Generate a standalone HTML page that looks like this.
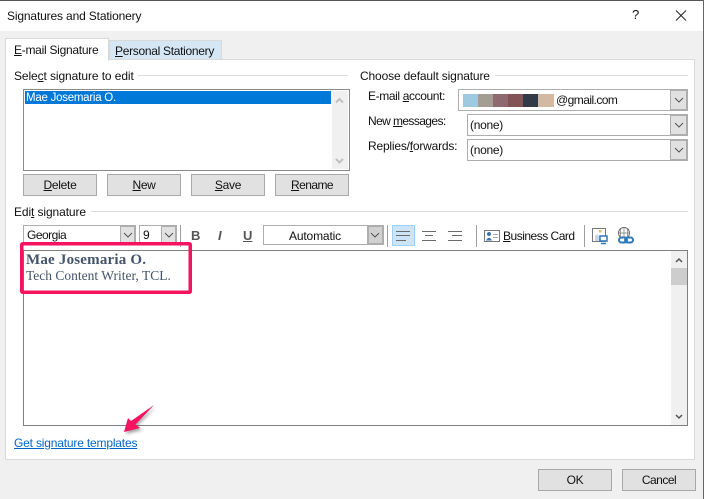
<!DOCTYPE html>
<html><head><meta charset="utf-8">
<style>
html,body{margin:0;padding:0;width:706px;height:499px;overflow:hidden;background:#f0f0f0}
.b{position:absolute;box-sizing:border-box}
.t{position:absolute;white-space:nowrap;font:12px/16px "Liberation Sans",sans-serif;color:#111}
.btn{position:absolute;box-sizing:border-box;height:22px;width:74px;background:#e1e1e1;border:1px solid #a8a8a8;font:12px/20px "Liberation Sans",sans-serif;color:#111;text-align:center;letter-spacing:-.3px}
.cb{position:absolute;box-sizing:border-box;background:#fff;border:1px solid #adadad}
.ar{position:absolute;box-sizing:border-box;background:#e1e1e1;border:2px solid #adadad;border-left-width:1px}
svg{position:absolute;overflow:visible}
</style></head><body>
<div class="b" style="left:0;top:0;width:703px;height:31px;background:#fff"></div>
<div class="b" style="left:0;top:0;width:704px;height:1px;background:#555"></div>
<div class="b" style="left:703px;top:0;width:1px;height:499px;background:#666"></div>
<div class="b" style="left:704px;top:0;width:2px;height:499px;background:#fff"></div>
<div class="t" style="left:7px;top:8px;letter-spacing:-.15px">Signatures and Stationery</div>
<div class="t" style="left:632px;top:7px;font-size:13px">?</div>
<svg style="left:0;top:0" width="706" height="40"><path d="M676 10.500L686 20.500M686 10.500L676 20.500" stroke="#222" stroke-width="1" fill="none"/></svg>

<div class="b" style="left:5px;top:59px;width:690px;height:401px;background:#fff;border:1px solid #d9d9d9"></div>
<div class="b" style="left:109px;top:40px;width:113px;height:20px;background:#d5e6f5;border:1px solid #d9d9d9"></div>
<div class="b" style="left:5px;top:38px;width:104px;height:23px;background:#fff;border:1px solid #d9d9d9;border-bottom:0"></div>
<div class="t" style="left:14px;top:42px;letter-spacing:-.27px"><u>E</u>-mail Signature</div>
<div class="t" style="left:115px;top:43px;letter-spacing:-.3px"><u>P</u>ersonal Stationery</div>

<div class="t" style="left:14px;top:68px;letter-spacing:-.1px">Sele<u>c</u>t signature to edit</div>
<div class="b" style="left:138px;top:75px;width:210px;height:1px;background:#dcdcdc"></div>
<div class="b" style="left:23px;top:89px;width:327px;height:82px;background:#fff;border:1px solid #8a8a8a"></div>
<div class="b" style="left:25px;top:91px;width:306px;height:13px;background:#0078d7"></div>
<div class="t" style="left:26px;top:90px;color:#fff;font-size:11.500px;letter-spacing:-.25px">Mae Josemaria O.</div>
<div class="b" style="left:332px;top:91px;width:16px;height:78px;background:#f0f0f0"></div>
<svg style="left:0;top:0" width="400" height="180"><path d="M336 102.500L339.500 99L343 102.500M336 159L339.500 162.500L343 159" stroke="#c0c0c0" stroke-width="2" fill="none"/></svg>

<div class="btn" style="left:23px;top:174px"><u>D</u>elete</div>
<div class="btn" style="left:107px;top:174px"><u>N</u>ew</div>
<div class="btn" style="left:191px;top:174px"><u>S</u>ave</div>
<div class="btn" style="left:275px;top:174px;letter-spacing:-.55px"><u>R</u>ename</div>

<div class="t" style="left:360px;top:68px;letter-spacing:-.15px">Choose default signature</div>
<div class="b" style="left:495px;top:75px;width:193px;height:1px;background:#dcdcdc"></div>
<div class="t" style="left:368px;top:88px;letter-spacing:-.38px">E-mail <u>a</u>ccount:</div>
<div class="t" style="left:368px;top:113px;letter-spacing:-.6px">New <u>m</u>essages:</div>
<div class="t" style="left:368px;top:138px;letter-spacing:-.2px">Replies/<u>f</u>orwards:</div>

<div class="cb" style="left:458px;top:89px;width:230px;height:22px"></div>
<div class="b" style="left:463px;top:94px;width:15px;height:13px;background:#9ecae1"></div>
<div class="b" style="left:478px;top:94px;width:15px;height:13px;background:#a39e91"></div>
<div class="b" style="left:493px;top:94px;width:15px;height:13px;background:#8e6a70"></div>
<div class="b" style="left:508px;top:94px;width:15px;height:13px;background:#835357"></div>
<div class="b" style="left:523px;top:94px;width:15px;height:13px;background:#323a48"></div>
<div class="b" style="left:538px;top:94px;width:16px;height:13px;background:#d3b9a1"></div>
<div class="t" style="left:556px;top:92px;letter-spacing:-.55px">@gmail.com</div>
<div class="cb" style="left:467px;top:114px;width:221px;height:22px"></div>
<div class="t" style="left:470px;top:117px;letter-spacing:-.3px">(none)</div>
<div class="cb" style="left:467px;top:139px;width:221px;height:22px"></div>
<div class="t" style="left:470px;top:142px;letter-spacing:-.3px">(none)</div>
<div class="ar" style="left:670px;top:89px;width:18px;height:22px"></div>
<div class="ar" style="left:670px;top:114px;width:18px;height:22px"></div>
<div class="ar" style="left:670px;top:139px;width:18px;height:22px"></div>
<svg style="left:0;top:0" width="706" height="170"><g stroke="#555" fill="none"><path d="M675 98L679 102L683 98"/><path d="M675 123L679 127L683 123"/><path d="M675 148L679 152L683 148"/></g></svg>

<div class="t" style="left:14px;top:204px;letter-spacing:-.1px">Edi<u>t</u> signature</div>
<div class="b" style="left:91px;top:211px;width:597px;height:1px;background:#dcdcdc"></div>

<div class="cb" style="left:23px;top:225px;width:113px;height:20px"></div>
<div class="ar" style="left:120px;top:225px;width:16px;height:20px"></div>
<div class="t" style="left:27px;top:227px;letter-spacing:-.5px">Georgia</div>
<div class="cb" style="left:139px;top:225px;width:38px;height:20px"></div>
<div class="ar" style="left:161px;top:225px;width:16px;height:20px"></div>
<div class="t" style="left:143px;top:227px">9</div>
<div class="b" style="left:180px;top:225px;width:1px;height:22px;background:#a0a0a0"></div>
<div class="t" style="left:191px;top:228px;font-weight:bold;font-size:13px;color:#555">B</div>
<div class="t" style="left:218px;top:228px;font-style:italic;font-weight:bold;font-size:13px;color:#555">I</div>
<div class="t" style="left:243px;top:228px;font-weight:bold;font-size:13px;color:#555"><u>U</u></div>
<div class="cb" style="left:263px;top:225px;width:121px;height:20px"></div>
<div class="ar" style="left:367px;top:225px;width:17px;height:20px;background:#d0d0d0;border-width:2px"></div>
<div class="t" style="left:289px;top:228px;letter-spacing:-.15px">Automatic</div>
<div class="b" style="left:387px;top:225px;width:1px;height:22px;background:#a0a0a0"></div>
<div class="b" style="left:392px;top:225px;width:23px;height:21px;background:#cce4f7;border:1px solid #99d1ff"></div>
<div class="b" style="left:476px;top:225px;width:1px;height:22px;background:#a0a0a0"></div>
<div class="t" style="left:503px;top:228px;letter-spacing:-.5px"><u>B</u>usiness Card</div>
<div class="b" style="left:584px;top:225px;width:1px;height:22px;background:#a0a0a0"></div>

<svg style="left:0;top:0" width="706" height="250"><g fill="none">
<path d="M124 233L128 237L132 233M165 233L169 237L173 233M371 233L375 237L379 233" stroke="#555"/>
<path d="M396 231.500H410M396 235.500H410M396 240.500H406" stroke="#6a6a6a"/>
<path d="M422 231.500H436M425 235.500H433M422 240.500H436" stroke="#6a6a6a"/>
<path d="M448 231.500H462M452 235.500H462M448 240.500H462" stroke="#6a6a6a"/>
<rect x="484.500" y="230.500" width="15" height="11" stroke="#777" fill="#fff"/>
<circle cx="489" cy="234" r="2" fill="#3f74ab"/><path d="M486 240.500Q489 235 492 240.500Z" fill="#3f74ab"/>
<path d="M493 234.500H498M493 237.500H498" stroke="#aaa"/>
<rect x="592.500" y="228.500" width="13" height="13" stroke="#777" fill="#fff"/>
<path d="M595 241V236L597 234L600 237V241Z" fill="#c9d7e8"/><rect x="599" y="230" width="2.500" height="2.500" fill="#f0b96b"/>
<rect x="600" y="236" width="7" height="5" stroke="#2f78b7" stroke-width="1.500" fill="#fff"/><path d="M601 243.500H606" stroke="#2f78b7" stroke-width="1.500"/>
<circle cx="624" cy="233" r="5.500" stroke="#666"/><path d="M618.500 233H629.500M624 227.500V238.500M620.500 229V237M627.500 229V237" stroke="#777" stroke-width=".7"/>
<rect x="619" y="237.500" width="8" height="5" rx="2.500" stroke="#2f78b7" stroke-width="2" fill="#fff"/><rect x="625" y="237.500" width="8" height="5" rx="2.500" stroke="#2f78b7" stroke-width="2"/>
</g></svg>

<div class="b" style="left:23px;top:250px;width:665px;height:176px;background:#fff;border:1px solid #7f7f7f"></div>
<div class="b" style="left:671px;top:251px;width:16px;height:174px;background:#f0f0f0"></div>
<div class="b" style="left:671px;top:268px;width:16px;height:17px;background:#cdcdcd"></div>
<svg style="left:0;top:0" width="706" height="430"><path d="M676 262L679 259L682 262M676 415L679 418L682 415" stroke="#555" stroke-width="1.500" fill="none"/></svg>

<div class="t" style="left:26px;top:252px;font:bold 15px/16px 'Liberation Serif',serif;color:#44546a;letter-spacing:.2px">Mae Josemaria O.</div>
<div class="t" style="left:26px;top:268px;font:13.500px/16px 'Liberation Serif',serif;color:#44546a">Tech Content Writer, TCL.</div>

<div class="t" style="left:14px;top:435px;color:#0066cc;letter-spacing:-.18px;text-decoration:underline">Get signature templates</div>

<svg style="left:0;top:0" width="706" height="499">
<defs><filter id="s" x="-30%" y="-30%" width="160%" height="160%"><feGaussianBlur stdDeviation="1.500"/></filter></defs>
<rect x="21.750" y="243.750" width="168.500" height="48.500" rx="1" fill="none" stroke="#f5125f" stroke-width="3.500"/>
<path d="M156 407L137 426L142 430L126 434L130 420L133 423Z" fill="#555" opacity=".55" filter="url(#s)"/>
<path d="M154 405L135.500 424.500L140 428L124 432L128 418L131 421Z" fill="#f5125f"/>
</svg>

<div class="btn" style="left:538px;top:469px">OK</div>
<div class="btn" style="left:622px;top:469px;letter-spacing:-.5px">Cancel</div>
</body></html>
